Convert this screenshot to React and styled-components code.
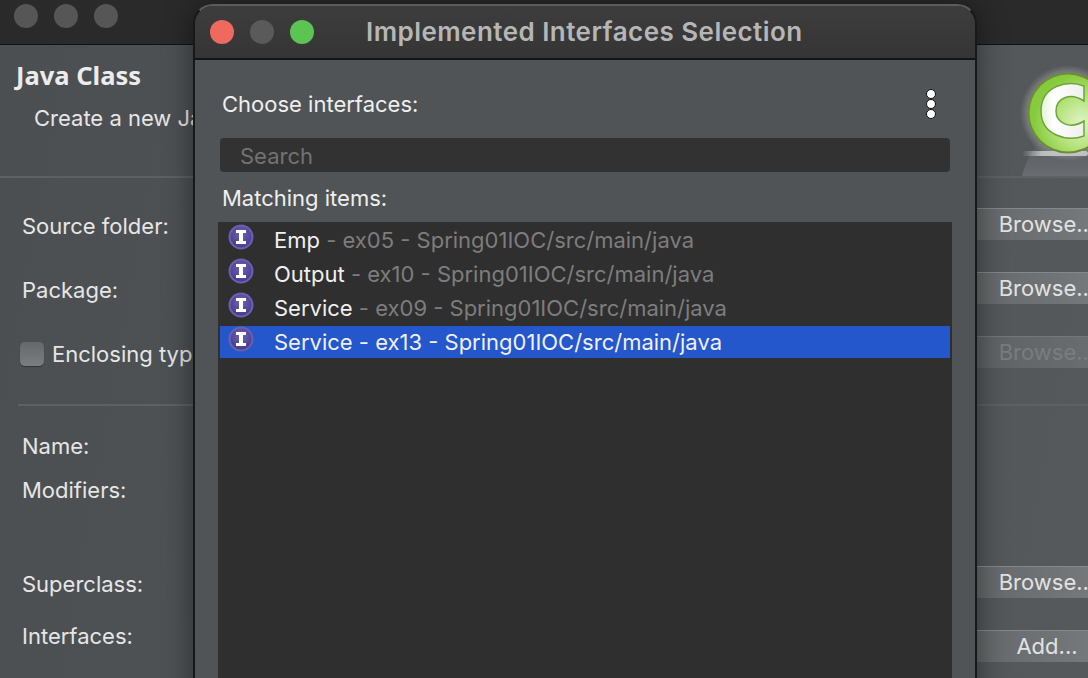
import React from 'react'
import styled, { createGlobalStyle } from 'styled-components'

const GlobalStyle = createGlobalStyle`
  html, body {
    margin: 0;
    height: 100%;
    overflow: hidden;
    background: #2a2a2a;
    font-family: Inter, "Noto Sans", sans-serif;
  }
`

const items = [
  { name: 'Emp', detail: 'ex05 - Spring01IOC/src/main/java' },
  { name: 'Output', detail: 'ex10 - Spring01IOC/src/main/java' },
  { name: 'Service', detail: 'ex09 - Spring01IOC/src/main/java' },
  { name: 'Service', detail: 'ex13 - Spring01IOC/src/main/java', selected: true },
]

const InterfaceIcon = () => (
  <svg width="26" height="26" viewBox="0 0 26 26">
    <defs>
      <radialGradient id="ifaceFill" cx="50%" cy="35%" r="65%">
        <stop offset="0" stopColor="#6f63b4" />
        <stop offset="1" stopColor="#463b8c" />
      </radialGradient>
    </defs>
    <circle cx="13" cy="13" r="12.5" fill="#6b60ad" />
    <circle cx="13" cy="13" r="10.5" fill="url(#ifaceFill)" />
    <path d="M8 6h10v3h-3v8h3v3H8v-3h3V9H8z" fill="#fff" />
  </svg>
)

const ClassLogo = () => (
  <svg width="68" height="131" viewBox="0 0 68 131">
    <defs>
      <radialGradient id="logoGlow" cx="50%" cy="50%" r="50%">
        <stop offset="0.78" stopColor="#fff" stopOpacity="0.3" />
        <stop offset="1" stopColor="#fff" stopOpacity="0" />
      </radialGradient>
      <radialGradient id="logoBall" cx="68%" cy="62%" r="62%">
        <stop offset="0" stopColor="#e0f3c6" />
        <stop offset="0.55" stopColor="#b4e27a" />
        <stop offset="1" stopColor="#86cb3c" />
      </radialGradient>
      <linearGradient id="logoC" x1="0" y1="0" x2="1" y2="0">
        <stop offset="0" stopColor="#e4f3d4" />
        <stop offset="0.3" stopColor="#ffffff" />
        <stop offset="1" stopColor="#eef0ea" />
      </linearGradient>
      <linearGradient id="logoCone" x1="0" y1="0" x2="0" y2="1">
        <stop offset="0" stopColor="#55595c" />
        <stop offset="1" stopColor="#696d72" />
      </linearGradient>
      <linearGradient id="logoShine" x1="0" y1="0" x2="1" y2="0">
        <stop offset="0" stopColor="#d8dad8" stopOpacity="0" />
        <stop offset="0.3" stopColor="#d8dad8" stopOpacity="0.75" />
        <stop offset="1" stopColor="#d8dad8" stopOpacity="0.75" />
      </linearGradient>
    </defs>
    <path d="M2 131 C6 115 13 103 22 92 L68 92 L68 131 Z" fill="url(#logoCone)" />
    <circle cx="48" cy="68" r="48" fill="url(#logoGlow)" />
    <rect x="2" y="106" width="66" height="5" rx="2.500" fill="url(#logoShine)" />
    <circle cx="48" cy="68" r="40.500" fill="#6f8a3a" />
    <circle cx="48" cy="68" r="38.500" fill="url(#logoBall)" />
    <path
      d="M64 41 C48 35 21 40 21 66 C21 90 46 97 64 91 L64 76 C50 85 36 78 36 66 C36 53 50 47 64 56 Z"
      fill="url(#logoC)"
      stroke="#6ea53a"
      strokeWidth="1.500"
    />
  </svg>
)

export default function App() {
  return (
    <>
      <GlobalStyle />
      <Desktop>
        <BackWindow>
          <BackTitleBar>
            <Light />
            <Light />
            <Light />
          </BackTitleBar>
          <BackBody>
            <Header>
              <HeaderText>
                <WizardTitle>Java Class</WizardTitle>
                <WizardSubtitle>Create a new Java class.</WizardSubtitle>
              </HeaderText>
              <ClassLogo />
            </Header>
            <FormRow $height={64} $gap={16}>
              <FieldLabel>Source folder:</FieldLabel>
              <SideButton>Browse...</SideButton>
            </FormRow>
            <FormRow $height={64}>
              <FieldLabel>Package:</FieldLabel>
              <SideButton>Browse...</SideButton>
            </FormRow>
            <FormRow $height={64}>
              <CheckLabel>
                <CheckBox />
                Enclosing type:
              </CheckLabel>
              <SideButton $disabled>Browse...</SideButton>
            </FormRow>
            <Divider />
            <FormRow $height={44}>
              <FieldLabel>Name:</FieldLabel>
            </FormRow>
            <FormRow $height={44}>
              <FieldLabel>Modifiers:</FieldLabel>
            </FormRow>
            <FormRow $height={64} $gap={40}>
              <FieldLabel>Superclass:</FieldLabel>
              <SideButton>Browse...</SideButton>
            </FormRow>
            <FormRow $height={60}>
              <FieldLabel $lift={20}>Interfaces:</FieldLabel>
              <SideButton $flat>Add...</SideButton>
            </FormRow>
          </BackBody>
        </BackWindow>

        <Dialog>
          <DialogTitleBar>
            <Light $color="#ee6a5f" />
            <Light $color="#5a5a5a" />
            <Light $color="#5cc453" />
            <DialogTitle>Implemented Interfaces Selection</DialogTitle>
          </DialogTitleBar>
          <DialogBody>
            <ChooseRow>
              <DialogLabel>Choose interfaces:</DialogLabel>
              <MenuDots>
                <Dot />
                <Dot />
                <Dot />
              </MenuDots>
            </ChooseRow>
            <SearchBox placeholder="Search" readOnly />
            <MatchLabel>Matching items:</MatchLabel>
            <ResultList>
              {items.map((item, key) => (
                <ResultRow key={key} $selected={item.selected}>
                  <InterfaceIcon />
                  <ResultText>
                    {item.name}
                    <ResultDetail $selected={item.selected}> - {item.detail}</ResultDetail>
                  </ResultText>
                </ResultRow>
              ))}
            </ResultList>
          </DialogBody>
        </Dialog>
      </Desktop>
    </>
  )
}

const Desktop = styled.div`
  position: relative;
  width: 1088px;
  height: 678px;
  overflow: hidden;
`

const BackWindow = styled.div`
  display: flex;
  flex-direction: column;
  height: 100%;
`

const BackTitleBar = styled.div`
  display: flex;
  align-items: center;
  gap: 16px;
  height: 32px;
  padding: 0 14px 12px;
  background: #2a2a2a;
  border-bottom: 1px solid #111;
  box-sizing: content-box;
`

const Light = styled.div`
  width: 24px;
  height: 24px;
  border-radius: 50%;
  flex: none;
  background: ${props => props.$color || '#565656'};
`

const BackBody = styled.div`
  flex: 1;
  background: linear-gradient(100deg, #4b4f51, #55595b);
`

const Header = styled.div`
  display: flex;
  justify-content: space-between;
  height: 131px;
  border-bottom: 2px solid #5d6163;
  box-sizing: content-box;
`

const HeaderText = styled.div`
  display: flex;
  flex-direction: column;
  padding: 16px 0 0 16px;
`

const WizardTitle = styled.div`
  font-family: "Noto Sans", sans-serif;
  font-size: 25.500px;
  line-height: 28px;
  font-weight: 700;
  color: #ececec;
`

const WizardSubtitle = styled.div`
  margin: 15px 0 0 18px;
  font-size: 22px;
  line-height: 28px;
  color: #e6e6e6;
  white-space: nowrap;
`

const FormRow = styled.div`
  display: flex;
  align-items: center;
  justify-content: space-between;
  height: ${props => props.$height}px;
  margin-top: ${props => props.$gap || 0}px;
  padding-left: 22px;
`

const FieldLabel = styled.div`
  font-size: 22px;
  line-height: 28px;
  color: #e6e6e6;
  margin-bottom: ${props => props.$lift || 0}px;
`

const CheckLabel = styled.div`
  display: flex;
  align-items: center;
  gap: 8px;
  margin-left: -2px;
  font-size: 22px;
  line-height: 28px;
  color: #e6e6e6;
`

const CheckBox = styled.div`
  width: 24px;
  height: 24px;
  border-radius: 5px;
  background: linear-gradient(#64686a, #7b7e80);
  box-shadow: 0 1px 1px rgba(0, 0, 0, 0.35);
`

const SideButton = styled.div`
  flex: none;
  width: 174px;
  height: 32px;
  margin: ${props => (props.$flat ? '0' : '0 0 4px')};
  margin-right: -46px;
  box-sizing: border-box;
  border-top: 1px solid #85888a;
  background: linear-gradient(90deg, #636668, #7c7f81);
  color: ${props => (props.$disabled ? '#8e9193' : '#e2e2e2')};
  opacity: ${props => (props.$disabled ? 0.65 : 1)};
  font-size: 22px;
  line-height: 30px;
  text-align: center;
  white-space: nowrap;
`

const Divider = styled.div`
  height: 2px;
  margin: 18px 0 18px 18px;
  background: #5d6163;
`

const Dialog = styled.div`
  position: absolute;
  left: 193px;
  top: 4px;
  width: 784px;
  height: 720px;
  box-sizing: border-box;
  display: flex;
  flex-direction: column;
  border: 2px solid #17181a;
  border-top-color: #5c5c5c;
  border-radius: 20px 20px 0 0;
  overflow: hidden;
  box-shadow: 0 0 30px rgba(0, 0, 0, 0.45);
`

const DialogTitleBar = styled.div`
  display: flex;
  align-items: center;
  gap: 16px;
  height: 54px;
  flex: none;
  padding-left: 15px;
  box-sizing: border-box;
  background: linear-gradient(#3d3d3d, #353535);
  border-bottom: 2px solid #141414;
`

const DialogTitle = styled.div`
  margin-left: 36px;
  font-size: 26px;
  font-weight: 600;
  letter-spacing: 0.45px;
  color: #b6b6b6;
  white-space: nowrap;
  padding-bottom: 2px;
`

const DialogBody = styled.div`
  flex: 1;
  display: flex;
  flex-direction: column;
  padding: 26px 25px 0 23px;
  background: #505456;
`

const ChooseRow = styled.div`
  display: flex;
  align-items: center;
  justify-content: space-between;
  height: 36px;
  padding: 0 14px 0 4px;
`

const DialogLabel = styled.div`
  font-size: 22px;
  line-height: 28px;
  color: #efefef;
`

const MenuDots = styled.div`
  display: flex;
  flex-direction: column;
`

const Dot = styled.div`
  width: 10px;
  height: 10px;
  box-sizing: border-box;
  border-radius: 50%;
  background: #fff;
  border: 1px solid #111;
`

const SearchBox = styled.input`
  flex: none;
  height: 34px;
  width: 730px;
  margin: 16px 0 0 2px;
  padding: 2px 0 0 20px;
  box-sizing: border-box;
  border: none;
  border-radius: 4px;
  outline: none;
  background: #323232;
  font-family: inherit;
  font-size: 22px;
  color: #ddd;
  &::placeholder {
    color: #727272;
    opacity: 1;
  }
`

const MatchLabel = styled.div`
  margin: 12px 0 10px 4px;
  font-size: 22px;
  line-height: 28px;
  color: #efefef;
`

const ResultList = styled.div`
  flex: 1;
  width: 734px;
  padding: 2px;
  box-sizing: border-box;
  background: #2f2f2f;
`

const ResultRow = styled.div`
  display: flex;
  align-items: flex-start;
  gap: 20px;
  height: 32px;
  margin-bottom: 2px;
  padding-left: 8px;
  background: ${props => (props.$selected ? '#2456cc' : 'transparent')};
`

const ResultText = styled.div`
  font-size: 22px;
  line-height: 32px;
  color: #f0f0f0;
  white-space: pre;
`

const ResultDetail = styled.span`
  color: ${props => (props.$selected ? '#f0f0f0' : '#7d7d7d')};
`
